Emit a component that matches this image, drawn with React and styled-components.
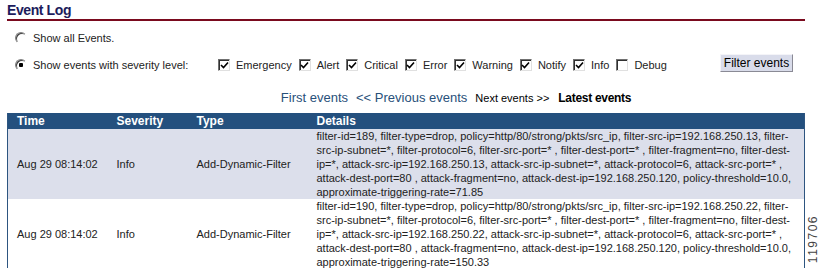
import React, { useState } from 'react'
import styled, { createGlobalStyle } from "styled-components"

const GlobalStyle = createGlobalStyle`
body{
    margin:0;
    background:#fff;
    font-family:"Liberation Sans", Arial, sans-serif;
    font-size:11px;
    color:#222;
}
`

const levels = [
    { name: "Emergency", on: true },
    { name: "Alert", on: true },
    { name: "Critical", on: true },
    { name: "Error", on: true },
    { name: "Warning", on: true },
    { name: "Notify", on: true },
    { name: "Info", on: true },
    { name: "Debug", on: false },
]

const events = [
    {
        time: "Aug 29 08:14:02",
        severity: "Info",
        type: "Add-Dynamic-Filter",
        details: [
            "filter-id=189, filter-type=drop, policy=http/80/strong/pkts/src_ip, filter-src-ip=192.168.250.13, filter-",
            "src-ip-subnet=*, filter-protocol=6, filter-src-port=* , filter-dest-port=* , filter-fragment=no, filter-dest-",
            "ip=*, attack-src-ip=192.168.250.13, attack-src-ip-subnet=*, attack-protocol=6, attack-src-port=* ,",
            "attack-dest-port=80 , attack-fragment=no, attack-dest-ip=192.168.250.120, policy-threshold=10.0,",
            "approximate-triggering-rate=71.85",
        ],
    },
    {
        time: "Aug 29 08:14:02",
        severity: "Info",
        type: "Add-Dynamic-Filter",
        details: [
            "filter-id=190, filter-type=drop, policy=http/80/strong/pkts/src_ip, filter-src-ip=192.168.250.22, filter-",
            "src-ip-subnet=*, filter-protocol=6, filter-src-port=* , filter-dest-port=* , filter-fragment=no, filter-dest-",
            "ip=*, attack-src-ip=192.168.250.22, attack-src-ip-subnet=*, attack-protocol=6, attack-src-port=* ,",
            "attack-dest-port=80 , attack-fragment=no, attack-dest-ip=192.168.250.120, policy-threshold=10.0,",
            "approximate-triggering-rate=150.33",
        ],
    },
]

const Check = ({ on }) => (
    <Box>
        {on && (
            <svg width="9" height="9" viewBox="0 0 9 9">
                <path d="M1 4 L3.5 6.5 L8 1.5" stroke="#000" strokeWidth="1.6" fill="none" />
            </svg>
        )}
    </Box>
)

const App = () => {

    const [mode, setMode] = useState("severity")

    return (
        <Page>
            <GlobalStyle />
            <Title>Event Log</Title>
            <Options>
                <RadioRow onClick={() => setMode("all")}>
                    <Radio checked={mode === "all"} />
                    <span>Show all Events.</span>
                </RadioRow>
                <RadioRow onClick={() => setMode("severity")}>
                    <Radio checked={mode === "severity"} />
                    <Label>Show events with severity level:</Label>
                    <Levels>
                        {levels.map((l) => (
                            <Level key={l.name}>
                                <Check on={l.on} />
                                <span>{l.name}</span>
                            </Level>
                        ))}
                    </Levels>
                    <FilterButton>Filter events</FilterButton>
                </RadioRow>
            </Options>
            <Nav>
                <NavLink>First events</NavLink>
                <NavLink>&lt;&lt; Previous events</NavLink>
                <NavPlain>Next events &gt;&gt;</NavPlain>
                <NavCurrent>Latest events</NavCurrent>
            </Nav>
            <Table>
                <colgroup>
                    <col style={{ width: 100 }} />
                    <col style={{ width: 80 }} />
                    <col style={{ width: 120 }} />
                    <col />
                </colgroup>
                <thead>
                    <tr>
                        <Th>Time</Th>
                        <Th>Severity</Th>
                        <Th>Type</Th>
                        <Th>Details</Th>
                    </tr>
                </thead>
                <tbody>
                    {events.map((e, i) => (
                        <Row key={i} shaded={i % 2 === 0}>
                            <Td>{e.time}</Td>
                            <Td>{e.severity}</Td>
                            <Td>{e.type}</Td>
                            <Details>
                                {e.details.map((line, j) => <div key={j}>{line}</div>)}
                            </Details>
                        </Row>
                    ))}
                </tbody>
            </Table>
            <FigureNo>119706</FigureNo>
        </Page>
    )
}

const Page = styled.div`
position:relative;
width:823px;
height:268px;
overflow:hidden;
padding:0 18px 0 7px;
box-sizing:border-box;
`

const Title = styled.h1`
margin:0;
padding:3px 0 1px 0;
font-size:14px;
line-height:15px;
font-weight:bold;
letter-spacing:-0.4px;
color:#1c1c5c;
border-bottom:2px solid #7a0a1e;
`

const Options = styled.div`
display:flex;
flex-direction:column;
gap:13px;
padding:10px 0 0 8px;
`

const RadioRow = styled.div`
display:flex;
align-items:center;
height:14px;
cursor:default;
`

const Radio = styled.span`
width:12px;
height:12px;
border-radius:50%;
box-sizing:border-box;
margin-right:6px;
border:1px solid;
border-color:#808080 #fff #fff #808080;
box-shadow:inset 1px 1px 0 #404040;
background:${p => p.checked ? "radial-gradient(circle, #000 0 2px, #fff 2.5px)" : "#fff"};
`

const Label = styled.span`
width:185px;
flex-shrink:0;
`

const Levels = styled.div`
display:flex;
align-items:center;
gap:7px;
`

const Level = styled.label`
display:flex;
align-items:center;
gap:6px;
`

const Box = styled.span`
width:12px;
height:12px;
box-sizing:border-box;
display:flex;
align-items:center;
justify-content:center;
background:#fff;
border:1px solid;
border-color:#707070 #e0e0e0 #e0e0e0 #707070;
box-shadow:inset 1px 1px 0 #303030;
`

const FilterButton = styled.button`
margin-left:53px;
margin-top:-4px;
height:18px;
padding:0 3px;
font-family:"Liberation Sans", Arial, sans-serif;
font-size:12px;
color:#000;
background:#d9dcea;
border:1px solid;
border-color:#f4f4f8 #8a8a95 #8a8a95 #f4f4f8;
`

const Nav = styled.div`
display:flex;
align-items:baseline;
justify-content:center;
gap:8px;
margin:18px 0 0 0;
padding-left:100px;
height:21px;
`

const NavLink = styled.span`
font-size:13px;
color:#28507a;
`

const NavPlain = styled.span`
font-size:11px;
color:#000;
`

const NavCurrent = styled.span`
font-size:12px;
font-weight:bold;
letter-spacing:-0.3px;
color:#000;
margin-left:1px;
`

const Table = styled.table`
width:798px;
border-collapse:collapse;
table-layout:fixed;
margin-top:2px;
border-left:1px solid #2d5580;
border-right:1px solid #2d5580;
`

const Th = styled.th`
background:#24507e;
color:#fff;
font-size:12px;
font-weight:bold;
text-align:left;
padding:0 0 0 9px;
height:16px;
line-height:16px;
`

const Row = styled.tr`
background:${p => p.shaded ? "#dcdfeb" : "#fff"};
`

const Td = styled.td`
padding:0 0 0 9px;
vertical-align:middle;
height:70px;
white-space:nowrap;
`

const Details = styled.td`
padding:0 0 0 9px;
line-height:14px;
white-space:nowrap;
vertical-align:top;
div{
    height:14px;
}
`

const FigureNo = styled.div`
position:absolute;
right:3px;
bottom:5px;
writing-mode:vertical-rl;
transform:rotate(180deg);
font-size:12px;
letter-spacing:1.5px;
color:#444;
`

export default App
